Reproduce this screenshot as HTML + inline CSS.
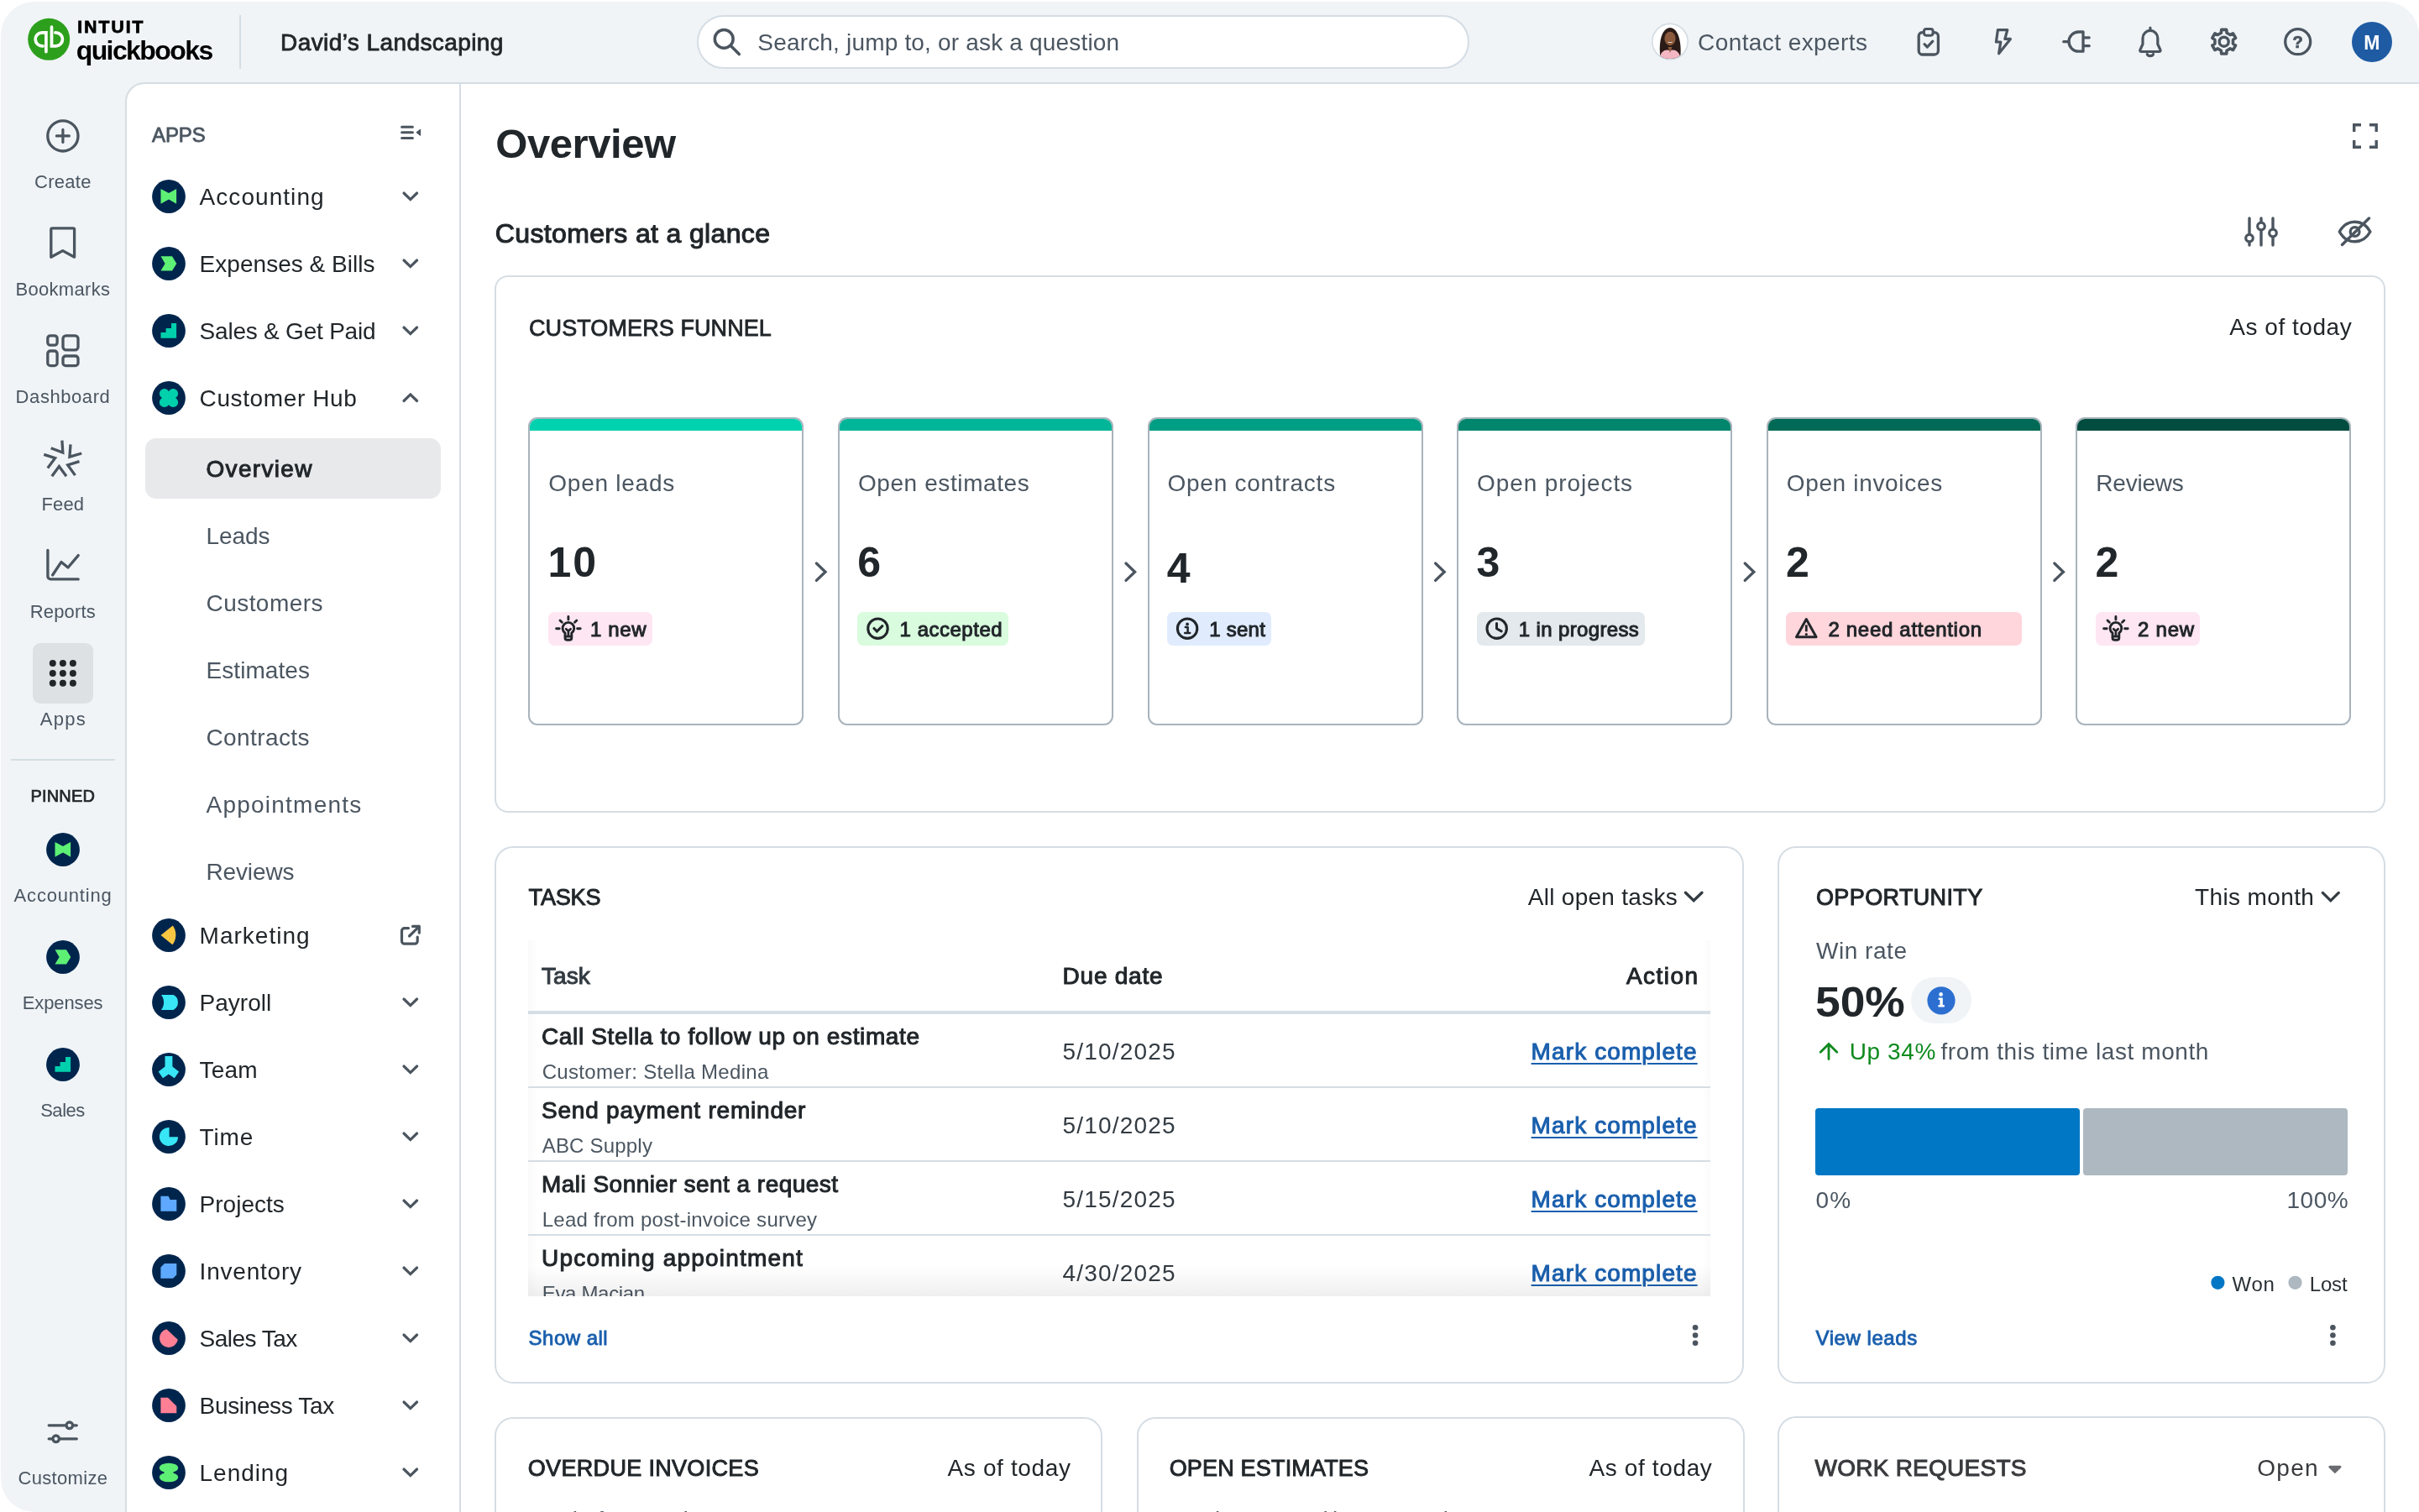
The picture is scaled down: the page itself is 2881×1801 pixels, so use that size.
<!DOCTYPE html><html lang="en"><head><meta charset="utf-8"><title>Overview - QuickBooks</title><style>
*{box-sizing:border-box;margin:0;padding:0}
html,body{width:2881px;height:1801px;overflow:hidden;background:#fff}
body{font-family:"Liberation Sans",sans-serif;color:#21262a;position:relative}
#root{position:absolute;left:0;top:0;width:2881px;height:1801px;overflow:hidden;will-change:transform}
#app{position:absolute;left:1px;top:2px;width:2880px;height:1799px;background:#f0f4f7;border-radius:40px;overflow:hidden}
#panel{position:absolute;left:149px;top:98px;width:2760px;height:1760px;background:#fff;border:2px solid #d5dde4;border-top-left-radius:23px}
#split{position:absolute;left:547px;top:100px;width:2px;height:1720px;background:#d5dde4}
.abs{position:absolute}
.t{position:absolute;white-space:pre;display:block;font-weight:normal;text-decoration:none}
.c{transform:translateX(-50%)}
.m{-webkit-text-stroke:0.8px currentColor}
.m2{-webkit-text-stroke:1.1px currentColor}
.b{font-weight:bold}
.ul{text-decoration:underline;text-decoration-thickness:2px;text-underline-offset:4px}
.ic{position:absolute;display:block;overflow:visible}
.card{position:absolute;background:#fff;border:2px solid #d5dde4;border-radius:22px}
.fc{position:absolute;top:497px;width:328px;height:367px;background:#fff;border:2px solid #a9b4bc;border-radius:11px;overflow:hidden}
.fc i{position:absolute;left:0;top:0;right:0;height:14px;display:block}
.badge{position:absolute;top:729px;height:40px;border-radius:7px}
.hr{position:absolute;background:#d5dde4}
</style></head><body>
<div id="root"><div id="app"></div><div id="panel"></div><div id="split"></div>
<header>
<svg class="ic" style="left:30px;top:19px" width="58" height="58" viewBox="30 19 58 58"><circle cx="58.2" cy="46.8" r="25" fill="#2ca01c"/><path d="M51 54.9 H50.2 A8.05 8.05 0 0 1 50.2 38.8 H54.9 V61.6" fill="none" stroke="#fff" stroke-width="3.7" stroke-linecap="round" stroke-linejoin="miter"/><path d="M65.9 38.8 H66.4 A8.05 8.05 0 0 1 66.4 54.9 H61.5 V32.2" fill="none" stroke="#fff" stroke-width="3.7" stroke-linecap="round" stroke-linejoin="miter"/></svg>
<div class="hr" style="left:285px;top:18px;width:2px;height:64px"></div>
<div class="abs" style="left:830px;top:18px;width:920px;height:64px;border:2px solid #d5dde4;border-radius:32px;background:#fff"></div>
<svg class="ic " style="left:847px;top:31px" width="39" height="39" viewBox="847 31 39 39"><circle cx="862.2" cy="46.4" r="10.9" fill="none" stroke="#4b555f" stroke-width="3.5"/><path d="M870.3 54.6 L880.3 64.6" fill="none" stroke="#4b555f" stroke-width="3.5" stroke-linecap="round" stroke-linejoin="round"/></svg>
<svg class="ic" style="left:1965px;top:26px" width="48" height="48" viewBox="1965 26 48 48"><defs><clipPath id="av"><circle cx="1989" cy="49.6" r="20.4"/></clipPath></defs><circle cx="1989" cy="49.6" r="21.2" fill="#fff" stroke="#d3dce3" stroke-width="1.6"/><g clip-path="url(#av)"><path d="M1978 72 C1975 56 1977 34 1989 33 C2001 34 2003 56 2001 72 Z" fill="#2b1b17"/><ellipse cx="1989" cy="46" rx="6.6" ry="8.2" fill="#8b5a3c"/><path d="M1985.5 49.5 Q1989 52.5 1992.500 49.5 Q1989 51 1985.5 49.500Z" fill="#fff"/><path d="M1976 72 C1977 61 1983 58 1989 60 C1995 58 2001 61 2002 72 Z" fill="#f3b6c3"/><path d="M1986.500 56 L1989 63 L1991.500 56 Z" fill="#8b5a3c"/></g></svg>
<svg class="ic " style="left:2281px;top:31px" width="33" height="39" viewBox="2281 31 33 39"><rect x="2285.2" y="38.6" width="23.2" height="26.4" rx="4.5" fill="none" stroke="#4b555f" stroke-width="3.3"/><rect x="2291.5" y="34.6" width="10.6" height="7.6" rx="2.6" fill="#f0f4f7" stroke="#4b555f" stroke-width="3.0"/><path d="M2292 52.6 L2295.4 56 L2301.8 49.2" fill="none" stroke="#4b555f" stroke-width="3.2" stroke-linecap="round" stroke-linejoin="round"/></svg>
<svg class="ic " style="left:2371px;top:31px" width="30" height="39" viewBox="2371 31 30 39"><path d="M2379.4 35.6 H2390.8 L2387.8 46.4 H2394.4 L2380.6 63.8 L2382.8 50 H2377.4 Z" fill="none" stroke="#4b555f" stroke-width="3.2" stroke-linecap="round" stroke-linejoin="round"/></svg>
<svg class="ic " style="left:2453px;top:33px" width="41" height="35" viewBox="2453 33 41 35"><path d="M2481 38 H2475.6 A11.6 11.6 0 0 0 2475.6 61.2 H2481 Z" fill="none" stroke="#4b555f" stroke-width="3.3" stroke-linecap="round" stroke-linejoin="round"/><path d="M2482 44.8 H2488.2 M2482 54.7 H2488.2 M2457.8 49.7 H2463.8" fill="none" stroke="#4b555f" stroke-width="3.3" stroke-linecap="round" stroke-linejoin="round"/></svg>
<svg class="ic " style="left:2543px;top:29px" width="37" height="43" viewBox="2543 29 37 43"><path d="M2552 52.5 V45.3 A8.9 8.9 0 0 1 2569.8 45.3 V52.5 L2572.9 59.3 Q2573.6 61.5 2571.4 61.5 H2550.4 Q2548.2 61.5 2548.9 59.3 Z" fill="none" stroke="#4b555f" stroke-width="3.2" stroke-linecap="round" stroke-linejoin="round"/><path d="M2560.9 33 V35.2 M2557.3 64.6 C2558.3 67.2 2563.5 67.2 2564.5 64.6" fill="none" stroke="#4b555f" stroke-width="3.2" stroke-linecap="round" stroke-linejoin="round"/></svg>
<svg class="ic " style="left:2629px;top:29px" width="40" height="42" viewBox="2629 29 40 42"><path d="M2645.7 35.4 L2651.7 35.4 L2652.1 39.2 L2656.1 41.5 L2659.5 39.9 L2662.6 45.2 L2659.5 47.4 L2659.5 52.0 L2662.6 54.2 L2659.5 59.5 L2656.1 57.9 L2652.1 60.2 L2651.7 64.0 L2645.7 64.0 L2645.3 60.2 L2641.3 57.9 L2637.9 59.5 L2634.8 54.2 L2637.9 52.0 L2637.9 47.4 L2634.8 45.2 L2637.9 39.9 L2641.3 41.5 L2645.3 39.2 Z" fill="none" stroke="#4b555f" stroke-width="3.6" stroke-linecap="round" stroke-linejoin="round"/><circle cx="2648.7" cy="49.7" r="5.5" fill="none" stroke="#4b555f" stroke-width="3.4"/></svg>
<svg class="ic " style="left:2716px;top:29px" width="43" height="42" viewBox="2716 29 43 42"><circle cx="2736.7" cy="49.7" r="15" fill="none" stroke="#4b555f" stroke-width="3.3"/><text x="2736.7" y="56.8" text-anchor="middle" font-family="Liberation Sans, sans-serif" font-weight="bold" font-size="20" fill="#4b555f" stroke="#4b555f" stroke-width="0.7">?</text></svg>
<div class="abs" style="left:2800.7px;top:25.6px;width:48.2px;height:48.2px;border-radius:50%;background:#1e5ba3"></div>
<span id="t0" class="t b" style="left:92.3px;top:21.3px;font-size:21px;line-height:21px;color:#000;letter-spacing:2.10px;-webkit-text-stroke:0.8px currentColor">INTUIT</span>
<span id="t1" class="t b" style="left:90.7px;top:43.7px;font-size:32px;line-height:32px;color:#000;letter-spacing:-1.59px">quickbooks</span>
<span id="t2" class="t m" style="left:334.0px;top:37.4px;font-size:28px;line-height:28px;color:#21262a;letter-spacing:0.42px">David’s Landscaping</span>
<span id="t3" class="t" style="left:902.3px;top:37.1px;font-size:28px;line-height:28px;color:#4b5661;letter-spacing:0.18px">Search, jump to, or ask a question</span>
<span id="t4" class="t" style="left:2022.0px;top:37.1px;font-size:28px;line-height:28px;color:#4b5661;letter-spacing:0.42px">Contact experts</span>
<span id="t5" class="t b c" style="left:2824.8px;top:40.0px;font-size:23px;line-height:23px;color:#fff">M</span>
</header>
<nav>
<svg class="ic " style="left:52px;top:139px" width="47" height="47" viewBox="52 139 47 47"><circle cx="74.9" cy="161.9" r="18.1" fill="none" stroke="#4b555f" stroke-width="3.3"/><path d="M67.4 161.9 H82.4 M74.9 154.4 V169.4" fill="none" stroke="#4b555f" stroke-width="3.2" stroke-linecap="round" stroke-linejoin="round"/></svg>
<svg class="ic " style="left:56px;top:267px" width="39" height="46" viewBox="56 267 39 46"><path d="M62.4 271.900 H87 A1.6 1.6 0 0 1 88.600 273.500 V306.200 L74.7 298.600 L60.8 306.200 V273.500 A1.6 1.6 0 0 1 62.4 271.900 Z" fill="none" stroke="#4b555f" stroke-width="3.3" stroke-linecap="round" stroke-linejoin="round"/></svg>
<svg class="ic " style="left:52px;top:395px" width="47" height="47" viewBox="52 395 47 47"><rect x="56.8" y="399.8" width="11.3" height="11.4" rx="3.2" fill="none" stroke="#4b555f" stroke-width="3.3"/><rect x="75" y="399.8" width="18" height="17" rx="3.6" fill="none" stroke="#4b555f" stroke-width="3.3"/><rect x="56.8" y="418" width="11.3" height="17.6" rx="3.2" fill="none" stroke="#4b555f" stroke-width="3.3"/><rect x="75" y="424" width="18" height="11.6" rx="3.2" fill="none" stroke="#4b555f" stroke-width="3.3"/></svg>
<svg class="ic " style="left:49px;top:521px" width="53" height="51" viewBox="49 521 53 51"><path d="M60.7 533.7 L74.8 539.1 L73.9 524.7 M84.0 529.4 L82.9 544.2 L97.2 540.0 M94.5 549.6 L80.7 553.9 L89.5 566.1 M79.0 567.2 L70.4 555.6 L61.8 567.2 M56.8 557.5 L65.6 545.7 L52.3 541.4 " fill="none" stroke="#4b555f" stroke-width="3.3" stroke-linecap="butt" stroke-linejoin="miter"/></svg>
<svg class="ic " style="left:52px;top:651px" width="47" height="46" viewBox="52 651 47 46"><path d="M56.9 655.4 V686.5 A3.4 3.4 0 0 0 60.3 689.900 H93.2" fill="none" stroke="#4b555f" stroke-width="3.3" stroke-linecap="round" stroke-linejoin="round"/><path d="M62.6 685 L73 669.4 L81 676 L93.2 661.6" fill="none" stroke="#4b555f" stroke-width="3.3" stroke-linecap="round" stroke-linejoin="round"/></svg>
<div class="abs" style="left:39px;top:766px;width:72px;height:72px;border-radius:9px;background:#dde1e4"></div>
<svg class="ic " style="left:56px;top:783px" width="39" height="39" viewBox="56 783 39 39"><circle cx="62.8" cy="790" r="4" fill="#21262a"/><circle cx="74.9" cy="790" r="4" fill="#21262a"/><circle cx="86.9" cy="790" r="4" fill="#21262a"/><circle cx="62.8" cy="801.9" r="4" fill="#21262a"/><circle cx="74.9" cy="801.9" r="4" fill="#21262a"/><circle cx="86.9" cy="801.9" r="4" fill="#21262a"/><circle cx="62.8" cy="813.8" r="4" fill="#21262a"/><circle cx="74.9" cy="813.8" r="4" fill="#21262a"/><circle cx="86.9" cy="813.8" r="4" fill="#21262a"/></svg>
<div class="hr" style="left:13px;top:904px;width:124px;height:2px"></div>
<svg class="ic app" style="left:54.7px;top:991.7px" width="40" height="40" viewBox="0 0 40 40"><circle cx="20" cy="20" r="19.9" fill="#00254d"/><path d="M10.5 10.9 L20 16 L29.1 10.9 V28.8 L20 23.4 L10.5 28.8 Z" fill="#5ef075"/></svg>
<svg class="ic app" style="left:54.7px;top:1119.8px" width="40" height="40" viewBox="0 0 40 40"><circle cx="20" cy="20" r="19.9" fill="#00254d"/><path d="M10.5 11.2 H24 L29.3 20 L24 28.6 H10.5 L15.6 20 Z" fill="#5ef075"/></svg>
<svg class="ic app" style="left:54.7px;top:1247.8px" width="40" height="40" viewBox="0 0 40 40"><circle cx="20" cy="20" r="19.9" fill="#00254d"/><path d="M10.5 28.8 V22 H16.6 V16.9 H23 V10.9 H29.1 V28.8 Z" fill="#00d0ac"/></svg>
<svg class="ic " style="left:54px;top:1689px" width="43" height="35" viewBox="54 1689 43 35"><path d="M58.200 1697.800 H77.5 M88 1697.800 H91.3 M58.200 1713.800 H61.5 M72 1713.800 H91.3" fill="none" stroke="#4b555f" stroke-width="3.3" stroke-linecap="round" stroke-linejoin="round"/><circle cx="82.8" cy="1697.8" r="3.8" fill="none" stroke="#4b555f" stroke-width="3.3"/><circle cx="66.7" cy="1713.8" r="3.8" fill="none" stroke="#4b555f" stroke-width="3.3"/></svg>
<a id="t6" class="t c" style="left:74.9px;top:206.2px;font-size:22px;line-height:22px;color:#4b5661;letter-spacing:0.30px">Create</a>
<a id="t7" class="t c" style="left:74.9px;top:334.2px;font-size:22px;line-height:22px;color:#4b5661;letter-spacing:0.31px">Bookmarks</a>
<a id="t8" class="t c" style="left:75.0px;top:462.2px;font-size:22px;line-height:22px;color:#4b5661;letter-spacing:0.57px">Dashboard</a>
<a id="t9" class="t c" style="left:74.8px;top:590.2px;font-size:22px;line-height:22px;color:#4b5661;letter-spacing:0.13px">Feed</a>
<a id="t10" class="t c" style="left:74.8px;top:718.2px;font-size:22px;line-height:22px;color:#4b5661;letter-spacing:0.15px">Reports</a>
<a id="t11" class="t c" style="left:75.4px;top:846.2px;font-size:22px;line-height:22px;color:#4b5661;letter-spacing:1.33px">Apps</a>
<a id="t12" class="t c" style="left:75.1px;top:1056.2px;font-size:22px;line-height:22px;color:#4b5661;letter-spacing:0.81px">Accounting</a>
<a id="t13" class="t c" style="left:74.6px;top:1184.2px;font-size:22px;line-height:22px;color:#4b5661;letter-spacing:-0.13px">Expenses</a>
<a id="t14" class="t c" style="left:74.5px;top:1312.2px;font-size:22px;line-height:22px;color:#4b5661;letter-spacing:-0.48px">Sales</a>
<a id="t15" class="t c" style="left:74.9px;top:1750.2px;font-size:22px;line-height:22px;color:#4b5661;letter-spacing:0.33px">Customize</a>
<h3 id="t16" class="t c" style="left:74.8px;top:937.9px;font-size:20px;line-height:20px;color:#21262a;letter-spacing:0.16px;-webkit-text-stroke:0.72px currentColor">PINNED</h3>
</nav>
<aside>
<svg class="ic " style="left:474px;top:147px" width="31" height="23" viewBox="474 147 31 23"><path d="M478.600 151.2 H491.4 M478.600 157.800 H491.4 M478.600 164.5 H491.4" fill="none" stroke="#4b555f" stroke-width="3.0" stroke-linecap="round" stroke-linejoin="round"/><path d="M495.3 157.800 L500.3 153.800 A0.8 0.8 0 0 1 501.1 154.4 V161.2 A0.8 0.8 0 0 1 500.3 161.800 Z" fill="#4b555f"/></svg>
<svg class="ic app" style="left:180.9px;top:213.8px" width="40" height="40" viewBox="0 0 40 40"><circle cx="20" cy="20" r="19.9" fill="#00254d"/><path d="M10.5 10.9 L20 16 L29.1 10.9 V28.8 L20 23.4 L10.5 28.8 Z" fill="#5ef075"/></svg>
<svg class="ic " style="left:477px;top:226px" width="24" height="16" viewBox="477 226 24 16"><path d="M481.0 230.0 L488.8 237.6 L496.6 230.0" fill="none" stroke="#4b555f" stroke-width="3.2" stroke-linecap="round" stroke-linejoin="miter"/></svg>
<svg class="ic app" style="left:180.9px;top:293.8px" width="40" height="40" viewBox="0 0 40 40"><circle cx="20" cy="20" r="19.9" fill="#00254d"/><path d="M10.5 11.2 H24 L29.3 20 L24 28.6 H10.5 L15.6 20 Z" fill="#5ef075"/></svg>
<svg class="ic " style="left:477px;top:306px" width="24" height="16" viewBox="477 306 24 16"><path d="M481.0 310.0 L488.8 317.6 L496.6 310.0" fill="none" stroke="#4b555f" stroke-width="3.2" stroke-linecap="round" stroke-linejoin="miter"/></svg>
<svg class="ic app" style="left:180.9px;top:373.8px" width="40" height="40" viewBox="0 0 40 40"><circle cx="20" cy="20" r="19.9" fill="#00254d"/><path d="M10.5 28.8 V22 H16.6 V16.9 H23 V10.9 H29.1 V28.8 Z" fill="#00d0ac"/></svg>
<svg class="ic " style="left:477px;top:386px" width="24" height="16" viewBox="477 386 24 16"><path d="M481.0 390.0 L488.8 397.6 L496.6 390.0" fill="none" stroke="#4b555f" stroke-width="3.2" stroke-linecap="round" stroke-linejoin="miter"/></svg>
<svg class="ic app" style="left:180.9px;top:453.8px" width="40" height="40" viewBox="0 0 40 40"><circle cx="20" cy="20" r="19.9" fill="#00254d"/><circle cx="14.8" cy="14.8" r="5.9" fill="#00d0ac"/><circle cx="14.8" cy="25.2" r="5.9" fill="#00d0ac"/><circle cx="25.2" cy="14.8" r="5.9" fill="#00d0ac"/><circle cx="25.2" cy="25.2" r="5.9" fill="#00d0ac"/><rect x="14.8" y="14.8" width="10.4" height="10.4" fill="#00d0ac"/></svg>
<svg class="ic " style="left:477px;top:465px" width="24" height="17" viewBox="477 465 24 17"><path d="M481.0 477.5 L488.8 469.9 L496.6 477.5" fill="none" stroke="#4b555f" stroke-width="3.2" stroke-linecap="round" stroke-linejoin="miter"/></svg>
<svg class="ic app" style="left:180.9px;top:1093.8px" width="40" height="40" viewBox="0 0 40 40"><circle cx="20" cy="20" r="19.9" fill="#00254d"/><path d="M10.5 19.9 L24.8 8.6 A19 19 0 0 1 24.4 31.3 Z" fill="#f9c741"/></svg>
<svg class="ic " style="left:474px;top:1099px" width="31" height="31" viewBox="474 1099 31 31"><path d="M486.5 1105.600 H481.7 A3.2 3.2 0 0 0 478.500 1108.800 V1121 A3.2 3.2 0 0 0 481.7 1124.200 H494 A3.2 3.2 0 0 0 497.2 1121 V1116" fill="none" stroke="#4b555f" stroke-width="3.2" stroke-linecap="round" stroke-linejoin="round"/><path d="M487.5 1115 L499.300 1103.400 M491.5 1103.400 H499.300 V1111.200" fill="none" stroke="#4b555f" stroke-width="3.2" stroke-linecap="round" stroke-linejoin="round"/></svg>
<svg class="ic app" style="left:180.9px;top:1173.8px" width="40" height="40" viewBox="0 0 40 40"><circle cx="20" cy="20" r="19.9" fill="#00254d"/><path d="M10.9 11.1 H25.5 A10 10 0 0 1 25.5 28.9 H10.9 A14 14 0 0 0 10.9 11.1 Z" fill="#38e6f5"/></svg>
<svg class="ic " style="left:477px;top:1186px" width="24" height="16" viewBox="477 1186 24 16"><path d="M481.0 1190.0 L488.8 1197.6 L496.6 1190.0" fill="none" stroke="#4b555f" stroke-width="3.2" stroke-linecap="round" stroke-linejoin="miter"/></svg>
<svg class="ic app" style="left:180.9px;top:1253.8px" width="40" height="40" viewBox="0 0 40 40"><circle cx="20" cy="20" r="19.9" fill="#00254d"/><path d="M15.5 4 H24.4 V16.5 L32.1 22.4 L26.8 30.3 L19.9 25.4 L13 30.3 L7.7 22.4 L15.5 16.5 Z" fill="#38e6f5"/></svg>
<svg class="ic " style="left:477px;top:1266px" width="24" height="16" viewBox="477 1266 24 16"><path d="M481.0 1270.0 L488.8 1277.6 L496.6 1270.0" fill="none" stroke="#4b555f" stroke-width="3.2" stroke-linecap="round" stroke-linejoin="miter"/></svg>
<svg class="ic app" style="left:180.9px;top:1333.8px" width="40" height="40" viewBox="0 0 40 40"><circle cx="20" cy="20" r="19.9" fill="#00254d"/><path d="M20.6 20.2 H31.1 A11.1 11.1 0 1 1 20.6 8.9 Z" fill="#38e6f5"/></svg>
<svg class="ic " style="left:477px;top:1346px" width="24" height="16" viewBox="477 1346 24 16"><path d="M481.0 1350.0 L488.8 1357.6 L496.6 1350.0" fill="none" stroke="#4b555f" stroke-width="3.2" stroke-linecap="round" stroke-linejoin="miter"/></svg>
<svg class="ic app" style="left:180.9px;top:1413.8px" width="40" height="40" viewBox="0 0 40 40"><circle cx="20" cy="20" r="19.9" fill="#00254d"/><path d="M10.4 10.7 H19.6 L21.6 15 H29.3 V28.8 H10.4 Z" fill="#5ea9ff"/></svg>
<svg class="ic " style="left:477px;top:1426px" width="24" height="16" viewBox="477 1426 24 16"><path d="M481.0 1430.0 L488.8 1437.6 L496.6 1430.0" fill="none" stroke="#4b555f" stroke-width="3.2" stroke-linecap="round" stroke-linejoin="miter"/></svg>
<svg class="ic app" style="left:180.9px;top:1493.8px" width="40" height="40" viewBox="0 0 40 40"><circle cx="20" cy="20" r="19.9" fill="#00254d"/><path d="M15 10.9 H29.3 V24.5 L25 28.8 H10.4 V15.5 Z" fill="#5ea9ff"/></svg>
<svg class="ic " style="left:477px;top:1506px" width="24" height="16" viewBox="477 1506 24 16"><path d="M481.0 1510.0 L488.8 1517.6 L496.6 1510.0" fill="none" stroke="#4b555f" stroke-width="3.2" stroke-linecap="round" stroke-linejoin="miter"/></svg>
<svg class="ic app" style="left:180.9px;top:1573.8px" width="40" height="40" viewBox="0 0 40 40"><circle cx="20" cy="20" r="19.9" fill="#00254d"/><path d="M17.4 9.2 L30.8 21.8 A11 11 0 1 1 17.4 9.2 Z" fill="#ff8095"/></svg>
<svg class="ic " style="left:477px;top:1586px" width="24" height="16" viewBox="477 1586 24 16"><path d="M481.0 1590.0 L488.8 1597.6 L496.6 1590.0" fill="none" stroke="#4b555f" stroke-width="3.2" stroke-linecap="round" stroke-linejoin="miter"/></svg>
<svg class="ic app" style="left:180.9px;top:1653.8px" width="40" height="40" viewBox="0 0 40 40"><circle cx="20" cy="20" r="19.9" fill="#00254d"/><path d="M10.4 10.7 H19 L29.3 21 V29.3 H10.4 Z" fill="#ff8095"/></svg>
<svg class="ic " style="left:477px;top:1666px" width="24" height="16" viewBox="477 1666 24 16"><path d="M481.0 1670.0 L488.8 1677.6 L496.6 1670.0" fill="none" stroke="#4b555f" stroke-width="3.2" stroke-linecap="round" stroke-linejoin="miter"/></svg>
<svg class="ic app" style="left:180.9px;top:1733.8px" width="40" height="40" viewBox="0 0 40 40"><circle cx="20" cy="20" r="19.9" fill="#00254d"/><ellipse cx="20" cy="14.4" rx="11.2" ry="5.7" fill="#5ef075"/><ellipse cx="20" cy="25.6" rx="11.2" ry="5.7" fill="#5ef075"/><rect x="14.6" y="14.4" width="10.8" height="11.2" fill="#5ef075"/></svg>
<svg class="ic " style="left:477px;top:1746px" width="24" height="16" viewBox="477 1746 24 16"><path d="M481.0 1750.0 L488.8 1757.6 L496.6 1750.0" fill="none" stroke="#4b555f" stroke-width="3.2" stroke-linecap="round" stroke-linejoin="miter"/></svg>
<div class="abs" style="left:173px;top:522px;width:352px;height:72px;border-radius:13px;background:#e8e9eb"></div>
<h3 id="t17" class="t m" style="left:181.0px;top:148.5px;font-size:24px;line-height:24px;color:#4b5661;letter-spacing:-0.12px">APPS</h3>
<a id="t18" class="t" style="left:237.6px;top:220.9px;font-size:28px;line-height:28px;color:#21262a;letter-spacing:1.05px">Accounting</a>
<a id="t19" class="t" style="left:237.6px;top:300.9px;font-size:28px;line-height:28px;color:#21262a;letter-spacing:0.03px">Expenses &amp; Bills</a>
<a id="t20" class="t" style="left:237.6px;top:380.9px;font-size:28px;line-height:28px;color:#21262a;letter-spacing:-0.22px">Sales &amp; Get Paid</a>
<a id="t21" class="t" style="left:237.6px;top:460.9px;font-size:28px;line-height:28px;color:#21262a;letter-spacing:0.61px">Customer Hub</a>
<a id="t22" class="t" style="left:237.6px;top:1100.9px;font-size:28px;line-height:28px;color:#21262a;letter-spacing:1.00px">Marketing</a>
<a id="t23" class="t" style="left:237.6px;top:1180.9px;font-size:28px;line-height:28px;color:#21262a;letter-spacing:-0.01px">Payroll</a>
<a id="t24" class="t" style="left:237.6px;top:1260.9px;font-size:28px;line-height:28px;color:#21262a;letter-spacing:0.16px">Team</a>
<a id="t25" class="t" style="left:237.6px;top:1340.9px;font-size:28px;line-height:28px;color:#21262a;letter-spacing:0.86px">Time</a>
<a id="t26" class="t" style="left:237.6px;top:1420.9px;font-size:28px;line-height:28px;color:#21262a">Projects</a>
<a id="t27" class="t" style="left:237.6px;top:1500.9px;font-size:28px;line-height:28px;color:#21262a;letter-spacing:0.79px">Inventory</a>
<a id="t28" class="t" style="left:237.6px;top:1580.9px;font-size:28px;line-height:28px;color:#21262a;letter-spacing:-0.54px">Sales Tax</a>
<a id="t29" class="t" style="left:237.6px;top:1660.9px;font-size:28px;line-height:28px;color:#21262a;letter-spacing:-0.35px">Business Tax</a>
<a id="t30" class="t" style="left:237.6px;top:1740.9px;font-size:28px;line-height:28px;color:#21262a;letter-spacing:0.95px">Lending</a>
<a id="t31" class="t" style="left:245.5px;top:544.8px;font-size:28px;line-height:28px;color:#21262a;letter-spacing:1.32px;-webkit-text-stroke:1.0px currentColor">Overview</a>
<a id="t32" class="t" style="left:245.5px;top:624.9px;font-size:28px;line-height:28px;color:#4b5661;letter-spacing:-0.08px">Leads</a>
<a id="t33" class="t" style="left:245.5px;top:704.8px;font-size:28px;line-height:28px;color:#4b5661;letter-spacing:0.45px">Customers</a>
<a id="t34" class="t" style="left:245.5px;top:785.0px;font-size:28px;line-height:28px;color:#4b5661;letter-spacing:0.07px">Estimates</a>
<a id="t35" class="t" style="left:245.5px;top:864.8px;font-size:28px;line-height:28px;color:#4b5661;letter-spacing:0.39px">Contracts</a>
<a id="t36" class="t" style="left:245.5px;top:945.1px;font-size:28px;line-height:28px;color:#4b5661;letter-spacing:1.23px">Appointments</a>
<a id="t37" class="t" style="left:245.5px;top:1024.8px;font-size:28px;line-height:28px;color:#4b5661;letter-spacing:-0.14px">Reviews</a>
</aside>
<main>
<svg class="ic " style="left:2799px;top:144px" width="37" height="37" viewBox="2799 144 37 37"><path d="M2803.700 157 V148.800 H2812 M2822 148.800 H2830.200 V157 M2830.200 167 V175.200 H2822 M2812 175.200 H2803.700 V167" fill="none" stroke="#4b555f" stroke-width="3.4" stroke-linecap="butt" stroke-linejoin="miter"/></svg>
<svg class="ic " style="left:2670px;top:255px" width="47" height="43" viewBox="2670 255 47 43"><path d="M2679 260 V277.500 M2679 289.500 V292 M2693 260 V263.500 M2693 275.500 V292 M2707 260 V271.500 M2707 283.500 V292" fill="none" stroke="#4b555f" stroke-width="3.4" stroke-linecap="round" stroke-linejoin="round"/><circle cx="2679" cy="283.6" r="4.3" fill="none" stroke="#4b555f" stroke-width="3.2"/><circle cx="2693" cy="269.5" r="4.3" fill="none" stroke="#4b555f" stroke-width="3.2"/><circle cx="2707" cy="277.5" r="4.3" fill="none" stroke="#4b555f" stroke-width="3.2"/></svg>
<svg class="ic " style="left:2781px;top:255px" width="48" height="43" viewBox="2781 255 48 43"><path d="M2786.300 276 C2791 267.500 2797.500 264.200 2804.600 264.200 C2811.700 264.200 2818.200 267.500 2822.900 276 C2818.200 284.500 2811.700 287.800 2804.600 287.800 C2797.500 287.800 2791 284.500 2786.300 276 Z" fill="none" stroke="#4b555f" stroke-width="3.4" stroke-linecap="round" stroke-linejoin="round"/><circle cx="2804.6" cy="276" r="5.4" fill="none" stroke="#4b555f" stroke-width="3.3"/><path d="M2789.500 291.500 L2821.500 260" fill="none" stroke="#4b555f" stroke-width="3.4" stroke-linecap="round" stroke-linejoin="round"/></svg>
<section>
<div class="card" style="left:589px;top:328px;width:2252px;height:640px;border-radius:16px"></div>
<div class="fc" style="left:629.3px"><i style="background:#00d1ae"></i></div>
<div class="badge" style="left:652.8px;width:123.8px;background:#ffe6f3"></div>
<svg class="ic " style="left:658px;top:730px" width="37" height="37" viewBox="658 730 37 37"><path d="M673.0 753.9 A6.85 6.85 0 1 1 680.8 753.9 V759.7 Q680.8 762.3 678.4 762.3 H675.4 Q673.0 762.3 673.0 759.7 Z M673.0 758.1 H680.8" fill="none" stroke="#21262a" stroke-width="2.9" stroke-linecap="round" stroke-linejoin="round"/><path d="M674.2 749.2 L676.9 751.8 L679.6 749.2 M676.9 751.8 V757.3" fill="none" stroke="#21262a" stroke-width="2.7" stroke-linecap="round" stroke-linejoin="round"/><path d="M676.9 734.5 V738.1 M662.6 748.7 H666.2 M687.6 748.7 H691.2 M667.0 739.0 L669.3 741.2 M686.8 739.0 L684.5 741.2" fill="none" stroke="#21262a" stroke-width="2.9" stroke-linecap="round" stroke-linejoin="round"/></svg>
<svg class="ic " style="left:968px;top:667px" width="19" height="29" viewBox="968 667 19 29"><path d="M972.4 671.0 L983.0 681.2 L972.4 691.4" fill="none" stroke="#4b555f" stroke-width="3.3" stroke-linecap="round" stroke-linejoin="miter"/></svg>
<div class="fc" style="left:997.9px"><i style="background:#00b598"></i></div>
<div class="badge" style="left:1021.4px;width:179.6px;background:#d9fcde"></div>
<svg class="ic " style="left:1027px;top:730px" width="37" height="37" viewBox="1027 730 37 37"><circle cx="1045.5" cy="748.7" r="11.7" fill="none" stroke="#21262a" stroke-width="3.1"/><path d="M1040.9 748.5 L1044.4 752.1 L1050.9 745.6" fill="none" stroke="#21262a" stroke-width="3.1" stroke-linecap="round" stroke-linejoin="miter"/></svg>
<svg class="ic " style="left:1337px;top:667px" width="19" height="29" viewBox="1337 667 19 29"><path d="M1341.0 671.0 L1351.6 681.2 L1341.0 691.4" fill="none" stroke="#4b555f" stroke-width="3.3" stroke-linecap="round" stroke-linejoin="miter"/></svg>
<div class="fc" style="left:1366.5px"><i style="background:#009e84"></i></div>
<div class="badge" style="left:1390.0px;width:123.8px;background:#e0ecfe"></div>
<svg class="ic " style="left:1396px;top:730px" width="37" height="37" viewBox="1396 730 37 37"><circle cx="1414.1" cy="748.7" r="11.7" fill="none" stroke="#21262a" stroke-width="3.1"/><circle cx="1414.1" cy="743.4000000000001" r="1.9" fill="#21262a"/><path d="M1411.8 747.0 H1414.6 V753.9 M1411.2 754.0 H1417.2" fill="none" stroke="#21262a" stroke-width="2.5" stroke-linecap="round" stroke-linejoin="round"/></svg>
<svg class="ic " style="left:1705px;top:667px" width="20" height="29" viewBox="1705 667 20 29"><path d="M1709.6 671.0 L1720.2 681.2 L1709.6 691.4" fill="none" stroke="#4b555f" stroke-width="3.3" stroke-linecap="round" stroke-linejoin="miter"/></svg>
<div class="fc" style="left:1735.1px"><i style="background:#00866c"></i></div>
<div class="badge" style="left:1758.6px;width:200.0px;background:#e3e9ed"></div>
<svg class="ic " style="left:1764px;top:730px" width="37" height="37" viewBox="1764 730 37 37"><circle cx="1782.7" cy="748.7" r="11.7" fill="none" stroke="#21262a" stroke-width="3.1"/><path d="M1782.5 742.5 V748.8 L1788.2 751.9" fill="none" stroke="#21262a" stroke-width="3.0" stroke-linecap="round" stroke-linejoin="round"/></svg>
<svg class="ic " style="left:2074px;top:667px" width="19" height="29" viewBox="2074 667 19 29"><path d="M2078.2 671.0 L2088.8 681.2 L2078.2 691.4" fill="none" stroke="#4b555f" stroke-width="3.3" stroke-linecap="round" stroke-linejoin="miter"/></svg>
<div class="fc" style="left:2103.7px"><i style="background:#006a56"></i></div>
<div class="badge" style="left:2127.2px;width:280.4px;background:#ffd6db"></div>
<svg class="ic " style="left:2133px;top:730px" width="37" height="37" viewBox="2133 730 37 37"><path d="M2151.3 737.5 L2163.1 758.8 H2139.5 Z" fill="none" stroke="#21262a" stroke-width="3.0" stroke-linecap="round" stroke-linejoin="round"/><path d="M2151.3 744.4 V752.3" fill="none" stroke="#21262a" stroke-width="2.8" stroke-linecap="butt" stroke-linejoin="round"/><circle cx="2151.2999999999997" cy="755.6" r="1.6" fill="#21262a"/></svg>
<svg class="ic " style="left:2442px;top:667px" width="20" height="29" viewBox="2442 667 20 29"><path d="M2446.8 671.0 L2457.4 681.2 L2446.8 691.4" fill="none" stroke="#4b555f" stroke-width="3.3" stroke-linecap="round" stroke-linejoin="miter"/></svg>
<div class="fc" style="left:2472.3px"><i style="background:#004d40"></i></div>
<div class="badge" style="left:2495.8px;width:124.0px;background:#ffe6f3"></div>
<svg class="ic " style="left:2501px;top:730px" width="37" height="37" viewBox="2501 730 37 37"><path d="M2516.0 753.9 A6.85 6.85 0 1 1 2523.8 753.9 V759.7 Q2523.8 762.3 2521.4 762.3 H2518.4 Q2516.0 762.3 2516.0 759.7 Z M2516.0 758.1 H2523.8" fill="none" stroke="#21262a" stroke-width="2.9" stroke-linecap="round" stroke-linejoin="round"/><path d="M2517.2 749.2 L2519.9 751.8 L2522.6 749.2 M2519.9 751.8 V757.3" fill="none" stroke="#21262a" stroke-width="2.7" stroke-linecap="round" stroke-linejoin="round"/><path d="M2519.9 734.5 V738.1 M2505.6 748.7 H2509.2 M2530.6 748.7 H2534.2 M2510.0 739.0 L2512.3 741.2 M2529.8 739.0 L2527.5 741.2" fill="none" stroke="#21262a" stroke-width="2.9" stroke-linecap="round" stroke-linejoin="round"/></svg>
<h1 id="t38" class="t b" style="left:590.3px;top:147.3px;font-size:49px;line-height:49px;color:#21262a;letter-spacing:-0.43px">Overview</h1>
<h2 id="t39" class="t m2" style="left:589.8px;top:262.2px;font-size:32px;line-height:32px;color:#21262a;letter-spacing:0.35px">Customers at a glance</h2>
<h3 id="t40" class="t m" style="left:630.0px;top:377.9px;font-size:27px;line-height:27px;color:#21262a;letter-spacing:0.09px">CUSTOMERS FUNNEL</h3>
<span id="t41" class="t" style="left:2655.3px;top:376.1px;font-size:28px;line-height:28px;color:#21262a;letter-spacing:0.53px">As of today</span>
<span id="t42" class="t" style="left:653.3px;top:561.9px;font-size:28px;line-height:28px;color:#4b5661;letter-spacing:0.75px">Open leads</span>
<span id="t43" class="t b" style="left:652.6px;top:644.5px;font-size:50px;line-height:50px;color:#21262a;letter-spacing:1.88px">10</span>
<span id="t44" class="t" style="left:703.0px;top:738.4px;font-size:24px;line-height:24px;color:#21262a;letter-spacing:0.66px;-webkit-text-stroke:1.0px currentColor">1 new</span>
<span id="t45" class="t" style="left:1021.9px;top:561.9px;font-size:28px;line-height:28px;color:#4b5661;letter-spacing:0.60px">Open estimates</span>
<span id="t46" class="t b" style="left:1021.2px;top:644.5px;font-size:50px;line-height:50px;color:#21262a">6</span>
<span id="t47" class="t" style="left:1071.6px;top:738.4px;font-size:24px;line-height:24px;color:#21262a;letter-spacing:0.51px;-webkit-text-stroke:1.0px currentColor">1 accepted</span>
<span id="t48" class="t" style="left:1390.5px;top:561.9px;font-size:28px;line-height:28px;color:#4b5661;letter-spacing:0.75px">Open contracts</span>
<span id="t49" class="t b" style="left:1389.8px;top:651.9px;font-size:50px;line-height:50px;color:#21262a">4</span>
<span id="t50" class="t" style="left:1440.2px;top:738.4px;font-size:24px;line-height:24px;color:#21262a;letter-spacing:0.26px;-webkit-text-stroke:1.0px currentColor">1 sent</span>
<span id="t51" class="t" style="left:1759.1px;top:561.9px;font-size:28px;line-height:28px;color:#4b5661;letter-spacing:0.89px">Open projects</span>
<span id="t52" class="t b" style="left:1758.4px;top:644.5px;font-size:50px;line-height:50px;color:#21262a">3</span>
<span id="t53" class="t" style="left:1808.8px;top:738.4px;font-size:24px;line-height:24px;color:#21262a;letter-spacing:0.36px;-webkit-text-stroke:1.0px currentColor">1 in progress</span>
<span id="t54" class="t" style="left:2127.7px;top:561.9px;font-size:28px;line-height:28px;color:#4b5661;letter-spacing:0.67px">Open invoices</span>
<span id="t55" class="t b" style="left:2127.0px;top:644.5px;font-size:50px;line-height:50px;color:#21262a">2</span>
<span id="t56" class="t" style="left:2177.4px;top:738.4px;font-size:24px;line-height:24px;color:#21262a;letter-spacing:0.70px;-webkit-text-stroke:1.0px currentColor">2 need attention</span>
<span id="t57" class="t" style="left:2496.3px;top:561.9px;font-size:28px;line-height:28px;color:#4b5661;letter-spacing:-0.23px">Reviews</span>
<span id="t58" class="t b" style="left:2495.6px;top:644.5px;font-size:50px;line-height:50px;color:#21262a">2</span>
<span id="t59" class="t" style="left:2546.0px;top:738.4px;font-size:24px;line-height:24px;color:#21262a;letter-spacing:0.78px;-webkit-text-stroke:1.0px currentColor">2 new</span>
</section>
<section>
<div class="card" style="left:589px;top:1008px;width:1488px;height:640px"></div>
<svg class="ic " style="left:2003px;top:1059px" width="30" height="20" viewBox="2003 1059 30 20"><path d="M2007.400 1063.200 L2017.200 1072.800 L2027 1063.200" fill="none" stroke="#333b42" stroke-width="3.3" stroke-linecap="round" stroke-linejoin="miter"/></svg>
<div class="abs" style="left:0;top:0;width:2881px;height:1543.8px;overflow:hidden">
<div class="abs" style="left:629px;top:1120px;width:1408px;height:424px;background:linear-gradient(to right,rgba(60,70,80,.028),rgba(60,70,80,0) 12px,rgba(60,70,80,0) 1398px,rgba(60,70,80,.022))"></div>
<div class="hr" style="left:629px;top:1204px;width:1408px;height:4px;background:#d5dee4"></div>
<div class="hr" style="left:629px;top:1294px;width:1408px;height:2px"></div>
<div class="hr" style="left:629px;top:1382px;width:1408px;height:2px"></div>
<div class="hr" style="left:629px;top:1470px;width:1408px;height:2px"></div>
<span id="t62" class="t" style="left:645.0px;top:1149.1px;font-size:28px;line-height:28px;color:#333b42;letter-spacing:0.06px;-webkit-text-stroke:1.01px currentColor">Task</span>
<span id="t63" class="t" style="left:1265.6px;top:1149.1px;font-size:28px;line-height:28px;color:#21262a;letter-spacing:0.76px;-webkit-text-stroke:1.01px currentColor">Due date</span>
<span id="t64" class="t" style="left:1937.0px;top:1149.1px;font-size:28px;line-height:28px;color:#21262a;letter-spacing:1.43px;-webkit-text-stroke:1.01px currentColor">Action</span>
<span id="t65" class="t" style="left:645.0px;top:1220.9px;font-size:28px;line-height:28px;color:#21262a;letter-spacing:0.63px;-webkit-text-stroke:1.01px currentColor">Call Stella to follow up on estimate</span>
<span id="t66" class="t" style="left:645.7px;top:1264.5px;font-size:24px;line-height:24px;color:#4b5661;letter-spacing:0.31px">Customer: Stella Medina</span>
<span id="t67" class="t" style="left:1265.6px;top:1239.1px;font-size:28px;line-height:28px;color:#333b42;letter-spacing:1.17px">5/10/2025</span>
<a id="t68" class="t ul" style="left:1823.6px;top:1239.1px;font-size:28px;line-height:28px;color:#1a5fad;letter-spacing:1.11px;-webkit-text-stroke:1.01px currentColor">Mark complete</a>
<span id="t69" class="t" style="left:645.0px;top:1308.9px;font-size:28px;line-height:28px;color:#21262a;letter-spacing:0.78px;-webkit-text-stroke:1.01px currentColor">Send payment reminder</span>
<span id="t70" class="t" style="left:645.7px;top:1352.5px;font-size:24px;line-height:24px;color:#4b5661;letter-spacing:0.20px">ABC Supply</span>
<span id="t71" class="t" style="left:1265.6px;top:1327.1px;font-size:28px;line-height:28px;color:#333b42;letter-spacing:1.17px">5/10/2025</span>
<a id="t72" class="t ul" style="left:1823.6px;top:1327.1px;font-size:28px;line-height:28px;color:#1a5fad;letter-spacing:1.11px;-webkit-text-stroke:1.01px currentColor">Mark complete</a>
<span id="t73" class="t" style="left:645.0px;top:1396.9px;font-size:28px;line-height:28px;color:#21262a;letter-spacing:0.47px;-webkit-text-stroke:1.01px currentColor">Mali Sonnier sent a request</span>
<span id="t74" class="t" style="left:645.7px;top:1440.5px;font-size:24px;line-height:24px;color:#4b5661;letter-spacing:0.26px">Lead from post-invoice survey</span>
<span id="t75" class="t" style="left:1265.6px;top:1415.1px;font-size:28px;line-height:28px;color:#333b42;letter-spacing:1.17px">5/15/2025</span>
<a id="t76" class="t ul" style="left:1823.6px;top:1415.1px;font-size:28px;line-height:28px;color:#1a5fad;letter-spacing:1.11px;-webkit-text-stroke:1.01px currentColor">Mark complete</a>
<span id="t77" class="t" style="left:645.0px;top:1484.9px;font-size:28px;line-height:28px;color:#21262a;letter-spacing:1.20px;-webkit-text-stroke:1.01px currentColor">Upcoming appointment</span>
<span id="t78" class="t" style="left:645.7px;top:1528.5px;font-size:24px;line-height:24px;color:#4b5661;letter-spacing:-0.32px">Eva Macian</span>
<span id="t79" class="t" style="left:1265.6px;top:1503.1px;font-size:28px;line-height:28px;color:#333b42;letter-spacing:1.17px">4/30/2025</span>
<a id="t80" class="t ul" style="left:1823.6px;top:1503.1px;font-size:28px;line-height:28px;color:#1a5fad;letter-spacing:1.11px;-webkit-text-stroke:1.01px currentColor">Mark complete</a>
<div class="abs" style="left:629px;top:1508px;width:1408px;height:36px;background:linear-gradient(to bottom,rgba(20,20,25,0),rgba(20,20,25,.065))"></div>
</div>
<svg class="ic " style="left:2012px;top:1574px" width="15" height="33" viewBox="2012 1574 15 33"><circle cx="2019.1" cy="1581.3" r="3.3" fill="#4b555f"/><circle cx="2019.1" cy="1590.5" r="3.3" fill="#4b555f"/><circle cx="2019.1" cy="1599.7" r="3.3" fill="#4b555f"/></svg>
</section>
<section>
<div class="card" style="left:2117px;top:1008px;width:724px;height:640px"></div>
<svg class="ic " style="left:2762px;top:1059px" width="30" height="20" viewBox="2762 1059 30 20"><path d="M2766.300 1063.400 L2775.800 1072.800 L2785.300 1063.400" fill="none" stroke="#333b42" stroke-width="3.3" stroke-linecap="round" stroke-linejoin="miter"/></svg>
<div class="abs" style="left:2276px;top:1164.4px;width:72px;height:55px;border-radius:27.5px;background:#f0f4f7"></div>
<svg class="ic " style="left:2292px;top:1172px" width="41" height="41" viewBox="2292 1172 41 41"><circle cx="2312" cy="1191.8" r="16.6" fill="#2c6fd1"/><circle cx="2311.6" cy="1184.4" r="2.3" fill="#fff"/><path d="M2308.600 1188.400 H2313.800 V1197 H2315.800 V1199.600 H2308.400 V1197 H2310.400 V1191 H2308.600 Z" fill="#fff"/></svg>
<svg class="ic " style="left:2163px;top:1239px" width="31" height="28" viewBox="2163 1239 31 28"><path d="M2178 1261.600 V1243.600 M2168.200 1253.200 L2178 1243.400 L2187.800 1253.200" fill="none" stroke="#0f8a1e" stroke-width="2.8" stroke-linecap="round" stroke-linejoin="miter"/></svg>
<div class="abs" style="left:2162px;top:1320px;width:314.500px;height:79.500px;border-radius:4px;background:#0077c5"></div>
<div class="abs" style="left:2481px;top:1320px;width:314.500px;height:79.500px;border-radius:4px;background:#adb8c0"></div>
<svg class="ic " style="left:2630px;top:1517px" width="117" height="24" viewBox="2630 1517 117 24"><circle cx="2641.4" cy="1527.8" r="8.1" fill="#0077c5"/><circle cx="2733.5" cy="1527.8" r="8.1" fill="#adb8c0"/></svg>
<svg class="ic " style="left:2771px;top:1574px" width="15" height="33" viewBox="2771 1574 15 33"><circle cx="2778.4" cy="1581.3" r="3.3" fill="#4b555f"/><circle cx="2778.4" cy="1590.5" r="3.3" fill="#4b555f"/><circle cx="2778.4" cy="1599.7" r="3.3" fill="#4b555f"/></svg>
</section>
<section>
<div class="card" style="left:589px;top:1688px;width:724px;height:300px"></div>
<div class="card" style="left:1353.500px;top:1688px;width:724px;height:300px"></div>
<div class="card" style="left:2117px;top:1687px;width:724px;height:300px"></div>
<svg class="ic " style="left:2769px;top:1741px" width="24" height="19" viewBox="2769 1741 24 19"><path d="M2774.800 1747.200 H2787 L2780.900 1753.300 Z" fill="#6b6c72" stroke="#6b6c72" stroke-width="3" stroke-linecap="round" stroke-linejoin="round"/></svg>
</section>
<h3 id="t60" class="t" style="left:629.6px;top:1055.5px;font-size:27px;line-height:27px;color:#21262a;letter-spacing:-0.16px;-webkit-text-stroke:0.97px currentColor">TASKS</h3>
<span id="t61" class="t" style="left:1819.8px;top:1055.1px;font-size:28px;line-height:28px;color:#21262a;letter-spacing:0.28px">All open tasks</span>
<a id="t81" class="t" style="left:629.6px;top:1582.2px;font-size:24px;line-height:24px;color:#1a5fad;letter-spacing:0.47px;-webkit-text-stroke:0.86px currentColor">Show all</a>
<h3 id="t82" class="t" style="left:2163.0px;top:1055.7px;font-size:27px;line-height:27px;color:#21262a;letter-spacing:0.37px;-webkit-text-stroke:0.97px currentColor">OPPORTUNITY</h3>
<span id="t83" class="t" style="left:2614.0px;top:1054.9px;font-size:28px;line-height:28px;color:#21262a;letter-spacing:0.38px">This month</span>
<span id="t84" class="t" style="left:2163.0px;top:1118.9px;font-size:28px;line-height:28px;color:#4b5661;letter-spacing:0.53px">Win rate</span>
<span id="t85" class="t b" style="left:2161.6px;top:1168.9px;font-size:50px;line-height:50px;color:#21262a;transform:scaleX(1.067);transform-origin:0 0">50%</span>
<span id="t86" class="t" style="left:2202.7px;top:1239.3px;font-size:28px;line-height:28px;color:#0f8a1e;letter-spacing:0.61px">Up 34%</span>
<span id="t87" class="t" style="left:2311.5px;top:1239.3px;font-size:28px;line-height:28px;color:#4b5661;letter-spacing:0.58px">from this time last month</span>
<span id="t88" class="t" style="left:2162.5px;top:1416.1px;font-size:28px;line-height:28px;color:#4b5661;letter-spacing:1.19px">0%</span>
<span id="t89" class="t" style="left:2723.5px;top:1416.1px;font-size:28px;line-height:28px;color:#4b5661;letter-spacing:0.51px">100%</span>
<span id="t90" class="t" style="left:2658.4px;top:1518.2px;font-size:24px;line-height:24px;color:#2a3035;letter-spacing:0.78px">Won</span>
<span id="t91" class="t" style="left:2750.7px;top:1518.2px;font-size:24px;line-height:24px;color:#2a3035;letter-spacing:-0.13px">Lost</span>
<a id="t92" class="t" style="left:2162.5px;top:1582.3px;font-size:24px;line-height:24px;color:#1a5fad;letter-spacing:0.56px;-webkit-text-stroke:0.86px currentColor">View leads</a>
<h3 id="t93" class="t" style="left:628.8px;top:1735.9px;font-size:27px;line-height:27px;color:#21262a;letter-spacing:0.32px;-webkit-text-stroke:0.97px currentColor">OVERDUE INVOICES</h3>
<span id="t94" class="t" style="left:1128.5px;top:1735.1px;font-size:28px;line-height:28px;color:#21262a;letter-spacing:0.64px">As of today</span>
<h3 id="t95" class="t" style="left:1392.7px;top:1735.9px;font-size:27px;line-height:27px;color:#21262a;letter-spacing:0.18px;-webkit-text-stroke:0.97px currentColor">OPEN ESTIMATES</h3>
<span id="t96" class="t" style="left:1892.4px;top:1735.1px;font-size:28px;line-height:28px;color:#21262a;letter-spacing:0.64px">As of today</span>
<h3 id="t97" class="t" style="left:2161.5px;top:1734.8px;font-size:28px;line-height:28px;color:#393a3d;letter-spacing:0.25px;-webkit-text-stroke:1.01px currentColor">WORK REQUESTS</h3>
<span id="t98" class="t" style="left:2688.3px;top:1734.9px;font-size:28px;line-height:28px;color:#393a3d;letter-spacing:1.29px">Open</span>
<span id="t99" class="t" style="left:629.0px;top:1797.0px;font-size:28px;line-height:28px;color:#4b5661;letter-spacing:-0.04px">Total of 3 overdue</span>
<span id="t100" class="t" style="left:1393.0px;top:1797.0px;font-size:28px;line-height:28px;color:#4b5661;letter-spacing:-1.32px">6 estimates awaiting approval</span>
</main>
</div></body></html>
